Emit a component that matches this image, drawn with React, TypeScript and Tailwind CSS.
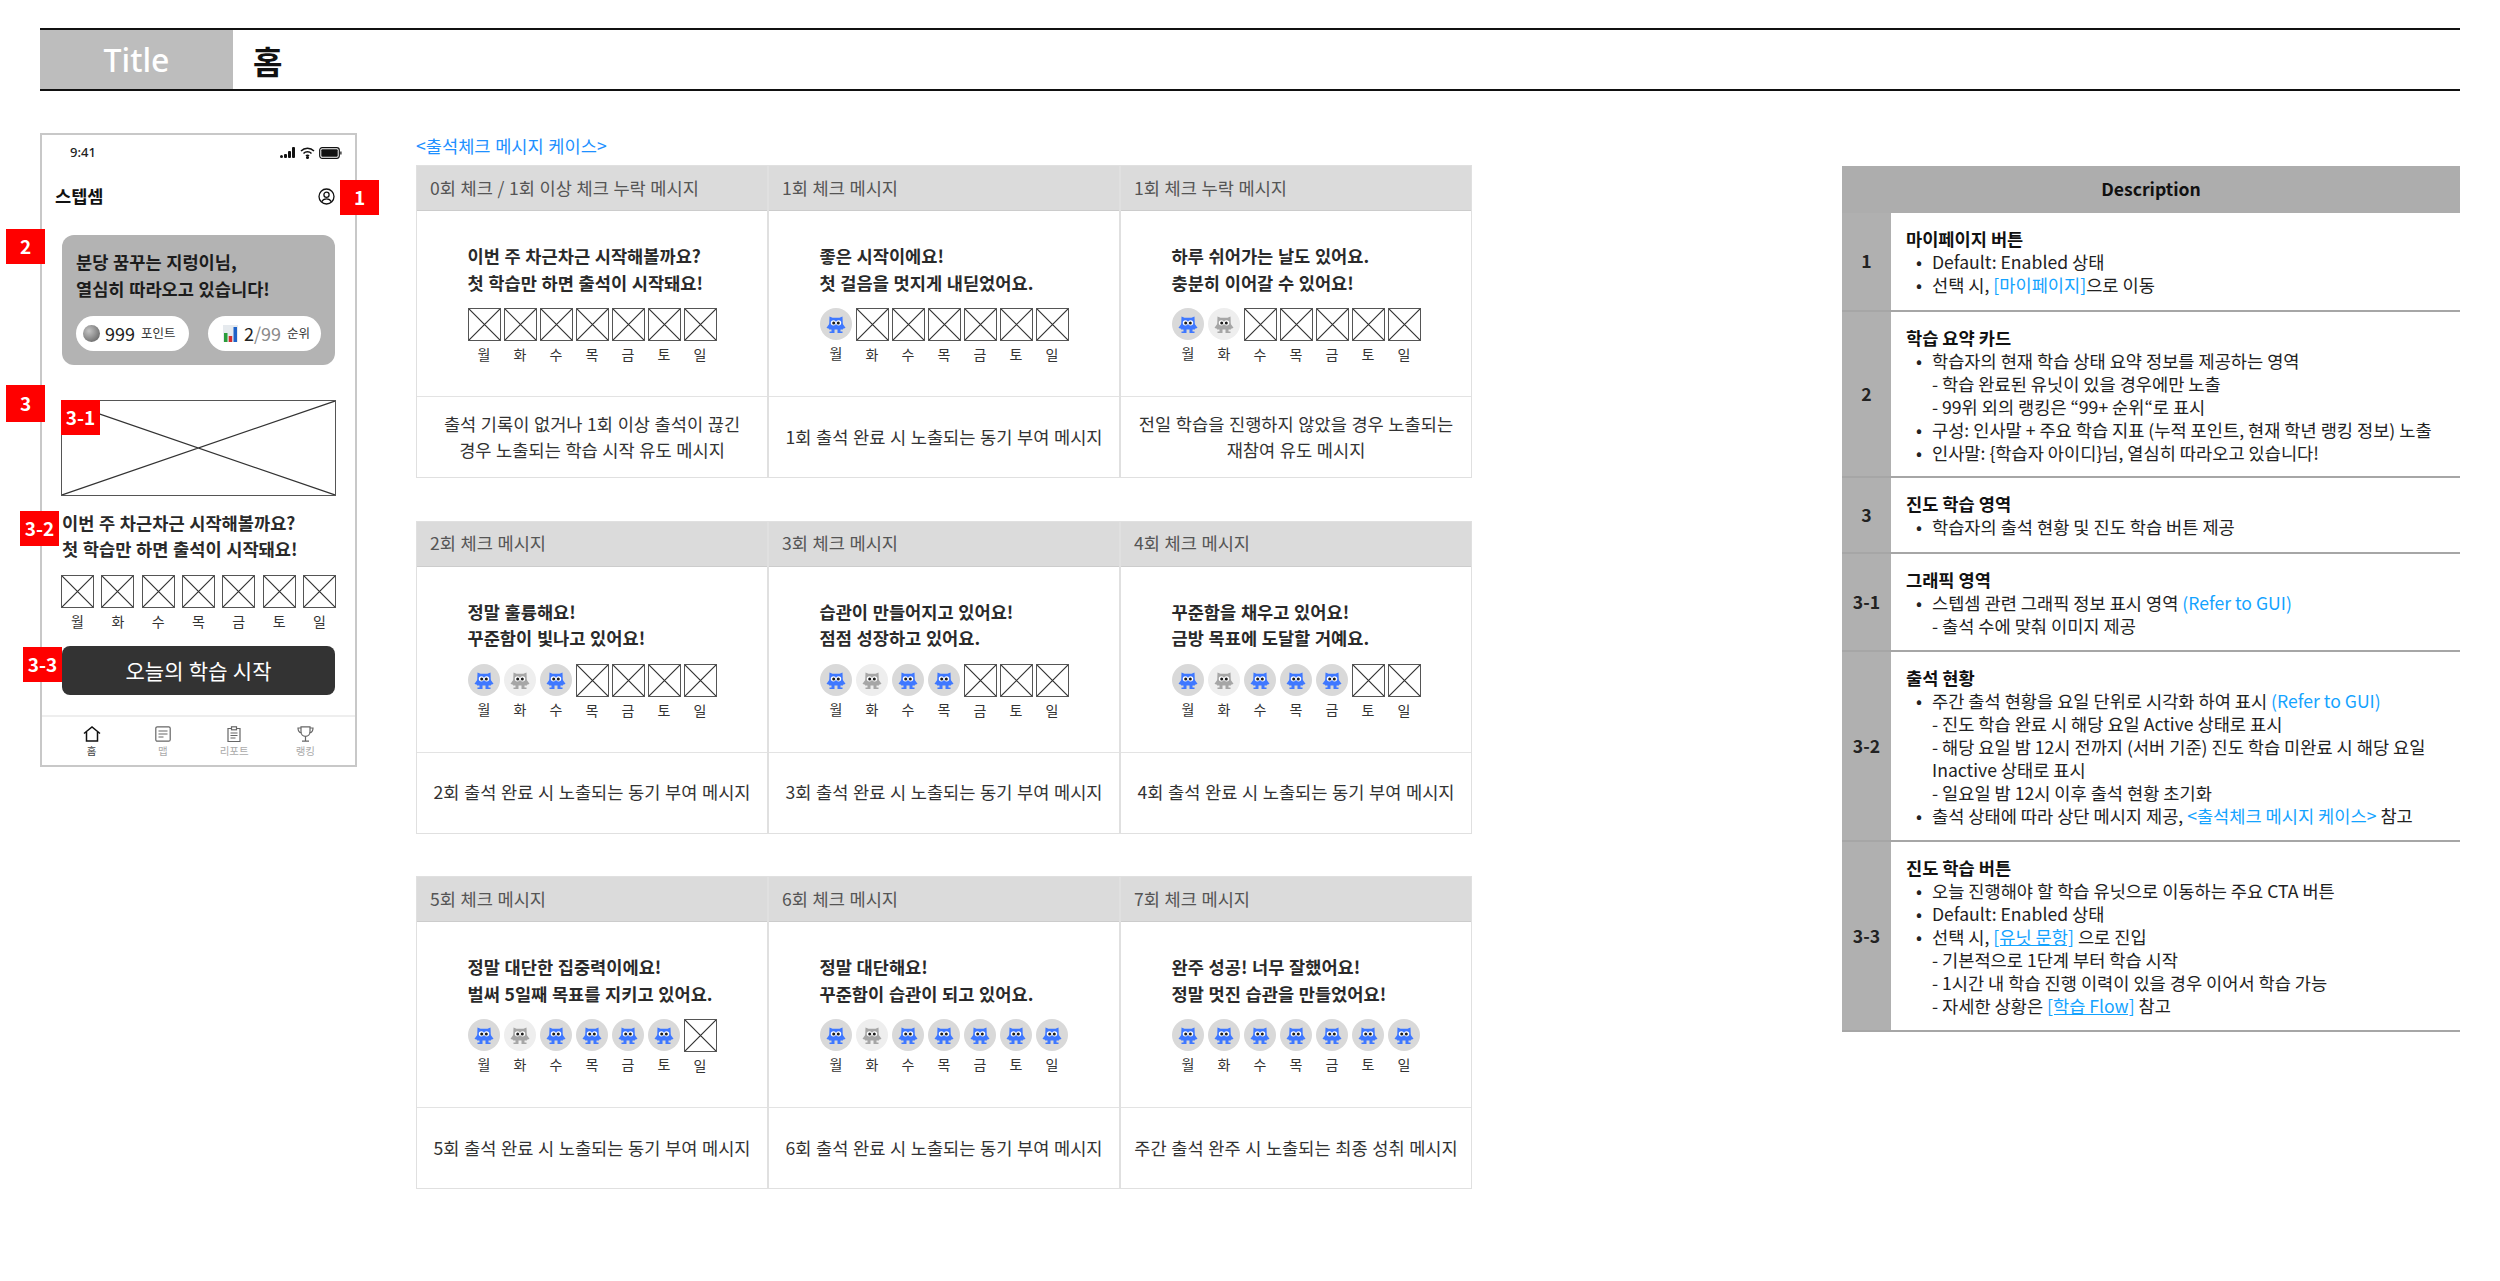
import type { ReactNode } from 'react';

const days = ['월', '화', '수', '목', '금', '토', '일'];

// a = active mascot, i = inactive mascot, x = empty placeholder
const cases = [
  [
    { head: '0회 체크 / 1회 이상 체크 누락 메시지', msg: ['이번 주 차근차근 시작해볼까요?', '첫 학습만 하면 출석이 시작돼요!'], state: 'xxxxxxx', foot: ['출석 기록이 없거나 1회 이상 출석이 끊긴', '경우 노출되는 학습 시작 유도 메시지'] },
    { head: '1회 체크 메시지', msg: ['좋은 시작이에요!', '첫 걸음을 멋지게 내딛었어요.'], state: 'axxxxxx', foot: ['1회 출석 완료 시 노출되는 동기 부여 메시지'] },
    { head: '1회 체크 누락 메시지', msg: ['하루 쉬어가는 날도 있어요.', '충분히 이어갈 수 있어요!'], state: 'aixxxxx', foot: ['전일 학습을 진행하지 않았을 경우 노출되는', '재참여 유도 메시지'] },
  ],
  [
    { head: '2회 체크 메시지', msg: ['정말 훌륭해요!', '꾸준함이 빛나고 있어요!'], state: 'aiaxxxx', foot: ['2회 출석 완료 시 노출되는 동기 부여 메시지'] },
    { head: '3회 체크 메시지', msg: ['습관이 만들어지고 있어요!', '점점 성장하고 있어요.'], state: 'aiaaxxx', foot: ['3회 출석 완료 시 노출되는 동기 부여 메시지'] },
    { head: '4회 체크 메시지', msg: ['꾸준함을 채우고 있어요!', '금방 목표에 도달할 거예요.'], state: 'aiaaaxx', foot: ['4회 출석 완료 시 노출되는 동기 부여 메시지'] },
  ],
  [
    { head: '5회 체크 메시지', msg: ['정말 대단한 집중력이에요!', '벌써 5일째 목표를 지키고 있어요.'], state: 'aiaaaax', foot: ['5회 출석 완료 시 노출되는 동기 부여 메시지'] },
    { head: '6회 체크 메시지', msg: ['정말 대단해요!', '꾸준함이 습관이 되고 있어요.'], state: 'aiaaaaa', foot: ['6회 출석 완료 시 노출되는 동기 부여 메시지'] },
    { head: '7회 체크 메시지', msg: ['완주 성공! 너무 잘했어요!', '정말 멋진 습관을 만들었어요!'], state: 'aaaaaaa', foot: ['주간 출석 완주 시 노출되는 최종 성취 메시지'] },
  ],
];

const XBox = ({ className = '' }: { className?: string }) => (
  <div className={`border-[1.5px] border-[#555] bg-white ${className}`}>
    <svg viewBox="0 0 100 100" preserveAspectRatio="none" className="block w-full h-full">
      <path d="M0 0L100 100M100 0L0 100" stroke="#333" strokeWidth="1.200" vectorEffect="non-scaling-stroke" />
    </svg>
  </div>
);

const Mascot = ({ active }: { active: boolean }) => {
  const c = active ? '#3f78ff' : '#a6a6a6';
  return (
    <div className={`w-[32px] h-[32px] rounded-full flex items-center justify-center ${active ? 'bg-[#d9d9d9]' : 'bg-[#eeeeee]'}`}>
      <svg viewBox="0 0 32 32" className="w-[32px] h-[32px]">
        <path d="M9.500 8.500l3 1.200h7l3-1.200.5 13H9z" fill={c} />
        <path d="M10 15L6.500 19.700l2 1 2.500-2M22 15l3.500 4.700-2 1-2.500-2" fill={c} />
        <path d="M11.500 21v2.500h-2v1.500h5v-4zM20.500 21v2.500h2v1.500h-5v-4z" fill={c} />
        <circle cx="13.400" cy="14.800" r="2.600" fill="#fff" />
        <circle cx="18.600" cy="14.800" r="2.600" fill="#fff" />
        <circle cx="13.700" cy="15" r="1.500" fill="#1a1a1a" />
        <circle cx="18.300" cy="15" r="1.500" fill="#1a1a1a" />
      </svg>
    </div>
  );
};

const Week = ({ state }: { state: string }) => (
  <div className="flex gap-[3px]">
    {days.map((d, i) => (
      <div key={d} className="w-[33px] flex flex-col items-center">
        {state[i] === 'x' ? <XBox className="w-[33px] h-[33px]" /> : <Mascot active={state[i] === 'a'} />}
        <span className="mt-[3px] text-[14px] leading-[20px] text-[#333]">{d}</span>
      </div>
    ))}
  </div>
);

const CaseTable = ({ items }: { items: (typeof cases)[number] }) => (
  <div className="grid grid-cols-[350px_352px_1fr] w-[1056px] border border-[#e0e0e0] [word-spacing:0.04em]">
    {items.map((item, i) => (
      <div key={item.head} className={`flex flex-col ${i > 0 ? 'border-l-2 border-[#e0e0e0]' : ''}`}>
        <div className="h-[45px] bg-[#dbdbdb] border-b border-[#cccccc] flex items-center pl-[13px] text-[17.6px] text-[#555]">{item.head}</div>
        <div className="h-[186px] border-b border-[#e3e3e3] flex flex-col items-center justify-start pt-[32px]">
          <div>
            {item.msg.map((m) => (
              <div key={m} className="text-[17.6px] leading-[26.500px] font-semibold text-[#2a2a2a]">{m}</div>
            ))}
            <div className="mt-[12px]">
              <Week state={item.state} />
            </div>
          </div>
        </div>
        <div className="h-[80px] flex flex-col items-center justify-center text-[17.6px] leading-[26.500px] text-[#333]">
          {item.foot.map((f) => (
            <div key={f}>{f}</div>
          ))}
        </div>
      </div>
    ))}
  </div>
);

const Badge = ({ label, className }: { label: string; className: string }) => (
  <div className={`absolute w-[39px] h-[35px] bg-[#ff0000] text-white font-bold text-[19px] flex items-center justify-center ${className}`}>{label}</div>
);

const Phone = () => (
  <div className="relative w-[317px] h-[634px] border-2 border-[#c8c8c8] bg-white flex flex-col [word-spacing:0.04em]">
    <Badge label="1" className="left-[298px] top-[45px]" />
    <Badge label="2" className="left-[-36px] top-[94px]" />
    <Badge label="3" className="left-[-36px] top-[250px] h-[37px]" />
    <Badge label="3-1" className="left-[19px] top-[265px]" />
    <Badge label="3-2" className="left-[-22px] top-[376px]" />
    <Badge label="3-3" className="left-[-19px] top-[512px]" />

    <div className="h-[35px] flex items-center justify-between pl-[28px] pr-[13px] font-['Noto_Sans',sans-serif]">
      <span className="text-[13px] font-medium text-[#222]">9:41</span>
      <div className="flex items-center gap-[4px]">
        <svg width="16" height="11" viewBox="0 0 16 11" fill="#111">
          <circle cx="1.500" cy="9.500" r="1.500" />
          <rect x="4" y="7" width="3" height="4" rx="1" />
          <rect x="8" y="4" width="3" height="7" rx="1" />
          <rect x="12" y="0" width="3" height="11" rx="1" />
        </svg>
        <svg width="15" height="12" viewBox="0 0 15 12" fill="none" stroke="#111" strokeWidth="1.500">
          <path d="M1 4a9 9 0 0 1 13 0M3.500 6.500a5.500 5.500 0 0 1 8 0M6 9a2 2 0 0 1 3 0" />
          <circle cx="7.500" cy="10.500" r=".8" fill="#111" />
        </svg>
        <svg width="23" height="12" viewBox="0 0 23 12">
          <rect x=".7" y=".7" width="19.600" height="10.600" rx="2.500" fill="none" stroke="#111" strokeWidth="1.200" />
          <rect x="2.300" y="2.300" width="16.400" height="7.400" rx="1" fill="#111" />
          <rect x="21.300" y="4.500" width="1.200" height="3" fill="#111" />
        </svg>
      </div>
    </div>

    <div className="h-[52px] flex items-center justify-between pl-[13px] pr-[20px]">
      <span className="text-[17.6px] font-bold text-[#111]">스텝셈</span>
      <svg width="17" height="17" viewBox="0 0 17 17" fill="none" stroke="#111" strokeWidth="1.300">
        <circle cx="8.500" cy="8.500" r="7.500" />
        <circle cx="8.500" cy="6.800" r="2.600" />
        <path d="M3.700 13.800c1-2.300 2.800-3 4.800-3s3.800.7 4.800 3" />
      </svg>
    </div>

    <div className="mx-[20px] mt-[13px] h-[130px] rounded-[12px] bg-[#b3b3b3] px-[14px] pt-[14px]">
      <div className="text-[17.6px] leading-[26.500px] font-semibold text-[#1c1c1c]">
        분당 꿈꾸는 지렁이님,
        <br />
        열심히 따라오고 있습니다!
      </div>
      <div className="mt-[14px] flex justify-between">
        <div className="w-[113px] h-[35px] rounded-full bg-white flex items-center pl-[7px]">
          <span className="w-[17px] h-[17px] rounded-full bg-[radial-gradient(circle_at_35%_35%,#c4c4c4,#555555)]" />
          <span className="ml-[5px] text-[18px] text-[#222]">999</span>
          <span className="ml-[6px] text-[12.500px] text-[#333]">포인트</span>
        </div>
        <div className="w-[113px] h-[35px] rounded-full bg-white flex items-center pl-[15px]">
          <svg width="15" height="17" viewBox="0 0 15 17">
            <rect width="15" height="17" fill="#e6eaee" />
            <rect x="1" y="8" width="3.500" height="9" fill="#2a9d3a" />
            <rect x="5.700" y="11" width="3.500" height="6" fill="#d32f2f" />
            <rect x="10.500" y="2" width="3.500" height="15" fill="#1e62c8" />
          </svg>
          <span className="ml-[6px] text-[18px] text-[#222]">
            2<span className="text-[#8a8a8a]">/99</span>
          </span>
          <span className="ml-[6px] text-[12.500px] text-[#333]">순위</span>
        </div>
      </div>
    </div>

    <XBox className="mx-[19px] mt-[35px] h-[96px] shrink-0" />

    <div className="ml-[20px] mt-[14px] text-[17.6px] leading-[26px] font-semibold text-[#2a2a2a]">
      이번 주 차근차근 시작해볼까요?
      <br />
      첫 학습만 하면 출석이 시작돼요!
    </div>

    <div className="mx-[19px] mt-[13px] flex justify-between">
      {days.map((d) => (
        <div key={d} className="w-[33px] flex flex-col items-center">
          <XBox className="w-[33px] h-[33px]" />
          <span className="mt-[3px] text-[14px] leading-[20px] text-[#333]">{d}</span>
        </div>
      ))}
    </div>

    <div className="mx-[20px] mt-[15px] h-[49px] shrink-0 rounded-[8px] bg-[#333333] text-white text-[21px] flex items-center justify-center">오늘의 학습 시작</div>

    <div className="mt-auto h-[50px] border-t-2 border-[#eeeeee] grid grid-cols-4 px-[14px] pt-[9px]">
      <NavItem label="홈" active>
        <svg width="18" height="16" viewBox="0 0 18 16" fill="none" stroke="#111" strokeWidth="1.500">
          <path d="M1 7.500L9 1l8 6.500M3.500 6v9h11V6" />
        </svg>
      </NavItem>
      <NavItem label="맵">
        <svg width="16" height="16" viewBox="0 0 16 16" fill="none" stroke="#666" strokeWidth="1.200">
          <rect x=".8" y=".8" width="14.400" height="14.400" rx="1.500" />
          <path d="M3.500 5h9M3.500 8h9M3.500 11h5" />
        </svg>
      </NavItem>
      <NavItem label="리포트">
        <svg width="14" height="16" viewBox="0 0 14 16" fill="none" stroke="#666" strokeWidth="1.200">
          <path d="M4.500 2.500H1v13h12v-13H9.500" />
          <rect x="4.500" y=".8" width="5" height="3" />
          <path d="M3.500 7h7M3.500 9.500h7M3.500 12h5" />
        </svg>
      </NavItem>
      <NavItem label="랭킹">
        <svg width="17" height="16" viewBox="0 0 17 16" fill="none" stroke="#666" strokeWidth="1.200">
          <path d="M4 .8h9v5a4.500 4.500 0 0 1-9 0zM4 2H1c0 3 1 4.500 3.500 5M13 2h3c0 3-1 4.500-3.500 5M8.500 10.500V15M5 15.200h7" />
        </svg>
      </NavItem>
    </div>
  </div>
);

const NavItem = ({ label, active, children }: { label: string; active?: boolean; children: ReactNode }) => (
  <div className="flex flex-col items-center">
    <div className="h-[16px] flex items-center">{children}</div>
    <span className={`mt-[2px] text-[10.500px] leading-[14px] ${active ? 'text-[#444]' : 'text-[#aaaaaa]'}`}>{label}</span>
  </div>
);

const Link = ({ children, underline }: { children: ReactNode; underline?: boolean }) => (
  <span className={`text-[#14a3ff] ${underline ? 'underline' : ''}`}>{children}</span>
);

const Bullet = ({ children }: { children: ReactNode }) => (
  <div className="flex">
    <span className="w-[12px] ml-[7px] mr-[7px] text-center">•</span>
    <span>{children}</span>
  </div>
);

const Sub = ({ children }: { children: ReactNode }) => <div className="pl-[26px]">{children}</div>;

const DescRow = ({ no, title, h, children }: { no: string; title: string; h: string; children: ReactNode }) => (
  <div className={`flex border-b-2 border-[#a6a6a6] ${h}`}>
    <div className="w-[49px] bg-[#b0b0b0] flex items-center justify-center font-semibold text-[17.6px] text-[#222]">{no}</div>
    <div className="flex-1 pl-[15px] pt-[14px] flex flex-col text-[17.6px] leading-[23px] text-[#222]">
      <div className="font-bold text-[#111]">{title}</div>
      {children}
    </div>
  </div>
);

const Description = () => (
  <div className="w-[618px]">
    <div className="h-[47px] bg-[#adadad] flex items-center justify-center font-semibold text-[17.6px] text-[#111]">Description</div>
    <DescRow no="1" title="마이페이지 버튼" h="h-[99px]">
      <Bullet>Default: Enabled 상태</Bullet>
      <Bullet>
        선택 시, <Link>[마이페이지]</Link>으로 이동
      </Bullet>
    </DescRow>
    <DescRow no="2" title="학습 요약 카드" h="h-[166px]">
      <Bullet>학습자의 현재 학습 상태 요약 정보를 제공하는 영역</Bullet>
      <Sub>- 학습 완료된 유닛이 있을 경우에만 노출</Sub>
      <Sub>- 99위 외의 랭킹은 “99+ 순위“로 표시</Sub>
      <Bullet>구성: 인사말 + 주요 학습 지표 (누적 포인트, 현재 학년 랭킹 정보) 노출</Bullet>
      <Bullet>{'인사말: {학습자 아이디}님, 열심히 따라오고 있습니다!'}</Bullet>
    </DescRow>
    <DescRow no="3" title="진도 학습 영역" h="h-[76px]">
      <Bullet>학습자의 출석 현황 및 진도 학습 버튼 제공</Bullet>
    </DescRow>
    <DescRow no="3-1" title="그래픽 영역" h="h-[98px]">
      <Bullet>
        스텝셈 관련 그래픽 정보 표시 영역 <Link>(Refer to GUI)</Link>
      </Bullet>
      <Sub>- 출석 수에 맞춰 이미지 제공</Sub>
    </DescRow>
    <DescRow no="3-2" title="출석 현황" h="h-[190px]">
      <Bullet>
        주간 출석 현황을 요일 단위로 시각화 하여 표시 <Link>(Refer to GUI)</Link>
      </Bullet>
      <Sub>- 진도 학습 완료 시 해당 요일 Active 상태로 표시</Sub>
      <Sub>- 해당 요일 밤 12시 전까지 (서버 기준) 진도 학습 미완료 시 해당 요일</Sub>
      <Sub>Inactive 상태로 표시</Sub>
      <Sub>- 일요일 밤 12시 이후 출석 현황 초기화</Sub>
      <Bullet>
        출석 상태에 따라 상단 메시지 제공, <Link>&lt;출석체크 메시지 케이스&gt;</Link> 참고
      </Bullet>
    </DescRow>
    <DescRow no="3-3" title="진도 학습 버튼" h="h-[190px]">
      <Bullet>오늘 진행해야 할 학습 유닛으로 이동하는 주요 CTA 버튼</Bullet>
      <Bullet>Default: Enabled 상태</Bullet>
      <Bullet>
        선택 시, <Link underline>[유닛 문항]</Link> 으로 진입
      </Bullet>
      <Sub>- 기본적으로 1단계 부터 학습 시작</Sub>
      <Sub>- 1시간 내 학습 진행 이력이 있을 경우 이어서 학습 가능</Sub>
      <Sub>
        - 자세한 상황은 <Link underline>[학습 Flow]</Link> 참고
      </Sub>
    </DescRow>
  </div>
);

export default function App() {
  return (
    <div className="w-[2500px] h-[1281px] overflow-hidden bg-white pl-[40px] pt-[28px] font-['Noto_Sans_CJK_KR',sans-serif]">
      <div className="w-[2420px] h-[63px] border-t-2 border-b-2 border-[#111] flex">
        <div className="w-[193px] bg-[#bdbdbd] text-white text-[32px] flex items-center justify-center font-['Noto_Sans',sans-serif] font-medium">Title</div>
        <div className="pl-[20px] flex items-center text-[32px] font-bold text-[#111]">홈</div>
      </div>

      <div className="flex mt-[42px]">
        <Phone />
        <div className="ml-[59px] w-[1056px]">
          <div className="h-[32px] text-[17.6px] leading-[25px] text-[#1e90ff] [word-spacing:0.04em]">&lt;출석체크 메시지 케이스&gt;</div>
          <div className="flex flex-col gap-[42.5px]">
            {cases.map((items, i) => (
              <CaseTable key={i} items={items} />
            ))}
          </div>
        </div>
        <div className="ml-[370px] pt-[33px]">
          <Description />
        </div>
      </div>
    </div>
  );
}
